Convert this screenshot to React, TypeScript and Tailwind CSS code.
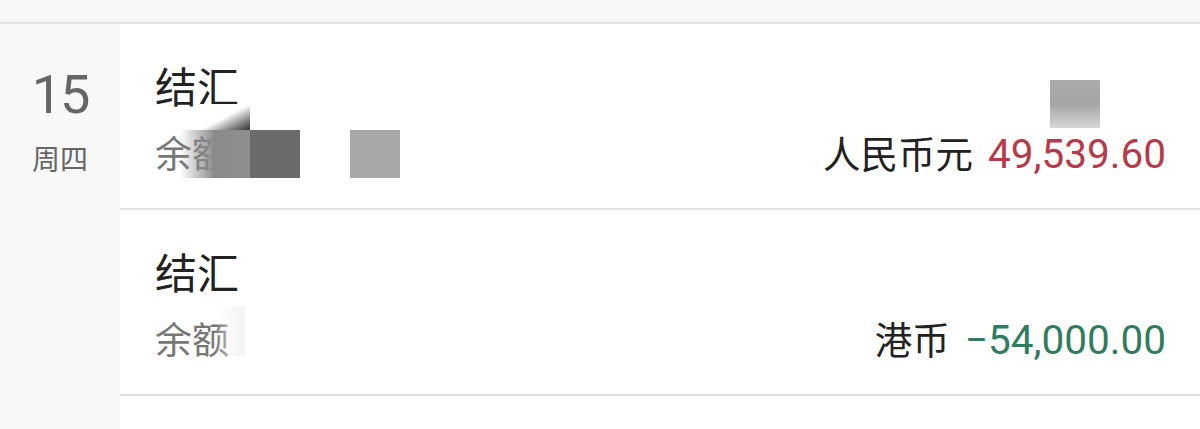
import React from "react";

const font = { fontFamily: 'Roboto, "Noto Sans CJK SC", "Noto Sans", sans-serif' };

function Row({
  currency,
  amount,
  amountClass,
  children,
}: {
  currency: string;
  amount: string;
  amountClass: string;
  children?: React.ReactNode;
}) {
  return (
    <div className="relative h-[186px] border-b-2 border-[#e2e2e3] pl-[35px] pr-[34px] pt-[44px]">
      <div className="text-[42px] leading-[42px] text-[#222222]">结汇</div>
      <div className="mt-[22px] flex items-baseline justify-between">
        <span className="text-[37px] leading-[44px] text-[#777777]">余额</span>
        <span className="flex items-baseline gap-[15px] leading-[44px]">
          <span className="text-[37.5px] text-[#222222]">{currency}</span>
          <span className={`text-[40.5px] ${amountClass}`}>{amount}</span>
        </span>
      </div>
      {children}
    </div>
  );
}

export default function App() {
  return (
    <div className="h-[429px] w-[1200px] overflow-hidden bg-white" style={font}>
      <div className="h-[22px] bg-[#f7f7f7]" />
      <div className="h-[2px] bg-[#e3e3e5]" />
      <div className="flex">
        <div className="flex h-[405px] w-[120px] flex-col items-center bg-[#f8f8f8] pt-[44px]">
          <div className="text-[54px] leading-[54px] tracking-[-2px] text-[#666666]">15</div>
          <div className="mt-[25px] text-[28px] leading-[28px] text-[#666666]">周四</div>
        </div>
        <div className="flex-1">
          <Row currency="人民币元" amount="49,539.60" amountClass="text-[#b73a4b]">
            <div className="absolute left-[80px] top-[80px] h-[26px] w-[50px] bg-gradient-to-br from-white via-white to-[#333333]" />
            <div className="absolute left-[60px] top-[106px] h-[48px] w-[70px] bg-gradient-to-r from-white/0 via-[#8a8a8a] to-[#8f8f8f]" />
            <div className="absolute left-[130px] top-[106px] h-[48px] w-[50px] bg-[#6b6b6b]" />
            <div className="absolute left-[230px] top-[106px] h-[48px] w-[50px] bg-[#a8a8a8]" />
            <div className="absolute left-[930px] top-[56px] h-[48px] w-[50px] bg-gradient-to-b from-[#ababab] via-[#a5a5a5] to-[#d8d8d8]" />
          </Row>
          <Row currency="港币" amount="−54,000.00" amountClass="text-[#2f7d5e]">
            <div className="absolute left-[95px] top-[96px] h-[50px] w-[30px] bg-gradient-to-r from-white/0 to-[#f3f3f3]" />
          </Row>
        </div>
      </div>
    </div>
  );
}
